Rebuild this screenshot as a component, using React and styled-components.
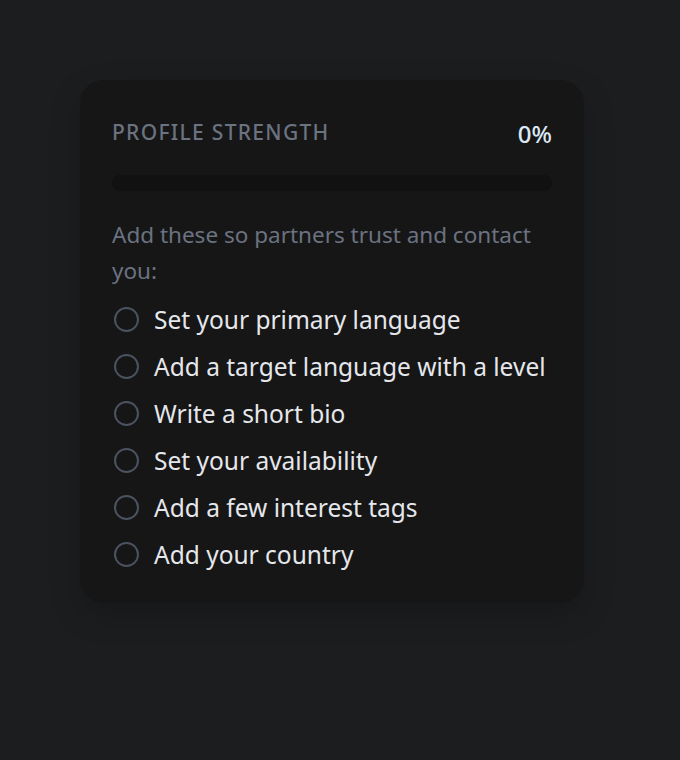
import React from 'react'
import styled, { createGlobalStyle } from 'styled-components'

const GlobalStyle = createGlobalStyle`
  html, body {
    margin: 0;
    background: #1c1d1f;
  }
  body {
    font-family: "Noto Sans", "Open Sans", sans-serif;
  }
`;

const Page = styled.div`
  min-height: 760px;
  padding: 80px;
  box-sizing: border-box;
`;

const Card = styled.section`
  width: 504px;
  box-sizing: border-box;
  padding: 37px 32px 25px;
  background: #161617;
  border-radius: 24px;
  box-shadow: 0 12px 32px rgba(0, 0, 0, 0.18);
`;

const Header = styled.div`
  display: flex;
  align-items: center;
  justify-content: space-between;
  height: 30px;
`;

const Title = styled.h2`
  margin: 0;
  font-size: 21px;
  font-weight: 500;
  letter-spacing: 1.3px;
  color: #6b7280;
  text-transform: uppercase;
`;

const Percent = styled.span`
  font-size: 24px;
  font-weight: 500;
  color: #dde8f6;
  padding-top: 2px;
`;

const Track = styled.div`
  margin-top: 28px;
  height: 16px;
  border-radius: 8px;
  background: #111112;
  overflow: hidden;
`;

const Fill = styled.div`
  height: 100%;
  background: #3b82f6;
`;

const Hint = styled.p`
  margin: 26px 0 7px;
  font-size: 22.5px;
  line-height: 36px;
  color: #6b7280;
`;

const List = styled.ul`
  list-style: none;
  margin: 0;
  padding: 0;
`;

const Item = styled.li`
  display: flex;
  align-items: center;
  gap: 15px;
  height: 47px;
  font-size: 24.5px;
  color: ${p => (p.$done ? '#9ca3af' : '#e5e7eb')};
`;

const Check = styled.span`
  flex: none;
  width: 25px;
  height: 25px;
  box-sizing: border-box;
  margin-left: 2px;
  border: 2px solid #4b5260;
  border-radius: 50%;
`;

const tasks = [
  'Set your primary language',
  'Add a target language with a level',
  'Write a short bio',
  'Set your availability',
  'Add a few interest tags',
  'Add your country',
]

export default function App() {
  const done = 0
  const pct = Math.round((done / tasks.length) * 100)
  return (
    <>
      <GlobalStyle />
      <Page>
        <Card>
          <Header>
            <Title>Profile strength</Title>
            <Percent>{pct}%</Percent>
          </Header>
          <Track>
            <Fill style={{ width: `${pct}%` }} />
          </Track>
          <Hint>Add these so partners trust and contact you:</Hint>
          <List>
            {tasks.map(t => (
              <Item key={t}>
                <Check />
                {t}
              </Item>
            ))}
          </List>
        </Card>
      </Page>
    </>
  )
}
